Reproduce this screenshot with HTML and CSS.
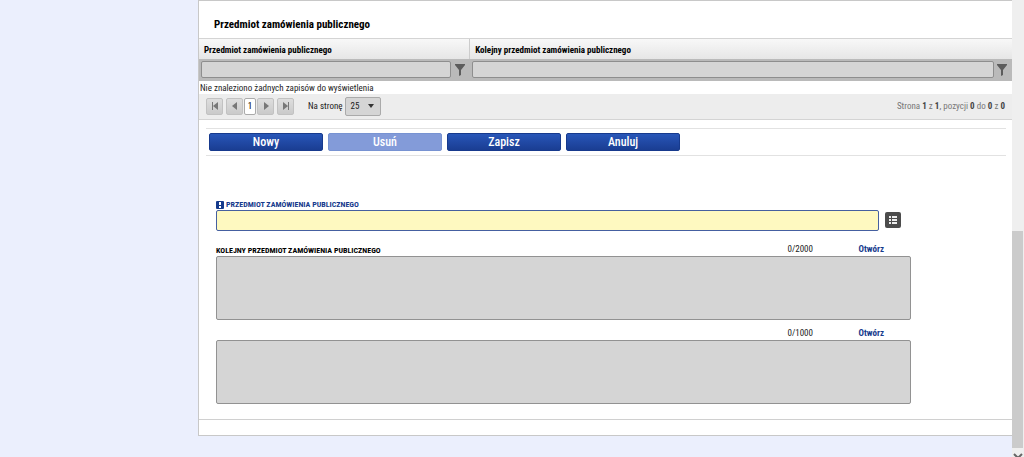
FILE: index.html
```html
<!DOCTYPE html>
<html lang="pl">
<head>
<meta charset="utf-8">
<meta name="viewport" content="width=device-width, initial-scale=1">
<title>Przedmiot zamówienia publicznego</title>
<link rel="stylesheet" href="styles.css">
</head>
<body>
<div class="page">
  <main class="panel">
    <h1 class="title">Przedmiot zamówienia publicznego</h1>
    <table class="grid">
      <colgroup><col class="col-first"><col></colgroup>
      <thead>
        <tr class="head"><th>Przedmiot zamówienia publicznego</th><th>Kolejny przedmiot zamówienia publicznego</th></tr>
        <tr class="filters">
          <td><div class="filter"><input type="text" aria-label="Filtr: Przedmiot zamówienia publicznego"><button type="button" aria-label="Filtruj"><svg width="10" height="12" viewBox="0 0 10 12"><path d="M0 0h10v1L6 6v5l-2 1V6L0 1z" fill="#5c5c5c"/></svg></button></div></td>
          <td><div class="filter filter-last"><input type="text" aria-label="Filtr: Kolejny przedmiot zamówienia publicznego"><button type="button" aria-label="Filtruj"><svg width="10" height="12" viewBox="0 0 10 12"><path d="M0 0h10v1L6 6v5l-2 1V6L0 1z" fill="#5c5c5c"/></svg></button></div></td>
        </tr>
      </thead>
      <tbody><tr class="empty"><td colspan="2">Nie znaleziono żadnych zapisów do wyświetlenia</td></tr></tbody>
    </table>
    <nav class="pager">
      <button type="button" class="nav-btn first" aria-label="Pierwsza"><svg width="8" height="8" viewBox="0 0 8 8"><path d="M1 0h1v8H1zM7 0v8L2 4z" fill="#777"/></svg></button>
      <button type="button" class="nav-btn" aria-label="Poprzednia"><svg width="8" height="8" viewBox="0 0 8 8"><path d="M6 0v8L1 4z" fill="#777"/></svg></button>
      <button type="button" class="current">1</button>
      <button type="button" class="nav-btn next" aria-label="Następna"><svg width="8" height="8" viewBox="0 0 8 8"><path d="M2 0v8l5-4z" fill="#777"/></svg></button>
      <button type="button" class="nav-btn" aria-label="Ostatnia"><svg width="8" height="8" viewBox="0 0 8 8"><path d="M6 0h1v8H6zM1 0v8l5-4z" fill="#777"/></svg></button>
      <label class="per-page" for="size">Na stronę</label>
      <span class="select"><select id="size"><option>25</option><option>50</option></select><svg width="6" height="4" viewBox="0 0 6 4"><path d="M0 0h6L3 4z" fill="#333"/></svg></span>
      <p class="summary">Strona <b>1</b> z <b>1</b>, pozycji <b>0</b> do <b>0</b> z <b>0</b></p>
    </nav>
    <div class="toolbar">
      <button type="button">Nowy</button>
      <button type="button" disabled>Usuń</button>
      <button type="button">Zapisz</button>
      <button type="button">Anuluj</button>
    </div>
    <form class="form">
      <label class="label required" for="subject"><svg width="8" height="8" viewBox="0 0 8 8"><rect width="8" height="8" rx="1" fill="#153a8c"/><path d="M3 1h2v3H3zM3 5h2v2H3z" fill="#fff"/></svg>PRZEDMIOT ZAMÓWIENIA PUBLICZNEGO</label>
      <div class="lookup">
        <input id="subject" type="text">
        <button type="button" aria-label="Wybierz z listy"><svg width="16" height="16" viewBox="0 0 16 16"><rect width="16" height="16" rx="2" fill="#4c4c4c"/><path d="M4 4h2v2H4zM7 4h5v2H7zM4 7h2v2H4zM7 7h5v2H7zM4 10h2v2H4zM7 10h5v2H7z" fill="#eee"/></svg></button>
      </div>
      <div class="area-head">
        <label class="label" for="next">KOLEJNY PRZEDMIOT ZAMÓWIENIA PUBLICZNEGO</label>
        <span class="count">0/2000</span><a href="#next">Otwórz</a>
      </div>
      <textarea id="next"></textarea>
      <div class="area-head">
        <span class="count">0/1000</span><a href="#extra">Otwórz</a>
      </div>
      <textarea id="extra" aria-label="Opis dodatkowy"></textarea>
    </form>
    <footer class="foot"></footer>
  </main>
  <div class="scroll">
    <div class="thumb"></div>
    <svg width="12" height="9" viewBox="0 0 12 9"><path d="M2 6l4 4 4-4" fill="none" stroke="#666" stroke-width="2"/></svg>
  </div>
</div>
</body>
</html>
```
FILE: styles.css
```css
* { box-sizing: border-box; }
body {
  margin: 0;
  background: #ebeffd;
  color: #222;
  font-family: "Roboto Condensed", Roboto, sans-serif;
  font-size: 9px;
  line-height: 12px;
}
button, input, select, textarea { margin: 0; font: inherit; }
button { padding: 0; border: 0; background: none; }
svg { display: block; }
.page { display: flex; min-height: 100vh; }
.panel {
  flex: 1;
  min-width: 0;
  align-self: flex-start;
  margin-left: 198px;
  border: 1px solid #c8c8c8;
  border-right: 0;
  background: #fff;
}
.title {
  margin: 0;
  padding: 16px 15px 5px;
  color: #000;
  font-size: 11px;
  line-height: 16px;
}
.grid { width: 100%; border-collapse: collapse; table-layout: fixed; }
.grid th, .grid td { padding: 0; }
.col-first { width: 33.3%; }
.head { height: 20px; background: linear-gradient(#f8f8f8, #e6e6e6); }
.grid th { padding: 2px 5px 0; border-top: 1px solid #d4d4d4; color: #000; text-align: left; }
.grid th + th { border-left: 1px solid #ccc; }
.filters { height: 22px; background: #bababa; }
.filter { display: flex; align-items: center; gap: 4px; padding: 0 5px 0 2px; }
.filter-last { gap: 3px; }
.filter input {
  flex: 1;
  min-width: 0;
  height: 17px;
  border: 1px solid #8e8e8e;
  border-radius: 2px;
  background: #d5d5d5;
}
.empty { height: 13px; }
.grid .empty td { padding: 1px 0 0 1px; }
.pager {
  display: flex;
  align-items: center;
  height: 26px;
  padding: 0 7px;
  border-bottom: 1px solid #d4d4d4;
  background: #ededed;
}
.nav-btn {
  display: flex;
  align-items: center;
  justify-content: center;
  width: 17px;
  height: 17px;
  border: 1px solid #c2c2c2;
  border-radius: 2px;
  background: linear-gradient(#dedede, #cacaca);
}
.first, .next { margin-right: 3px; }
.current {
  width: 12px;
  height: 17px;
  margin: 0 1px;
  border: 1px solid #aaa;
  border-radius: 2px;
  background: #fff;
  color: #000;
}
.per-page { margin: 0 3px 0 14px; }
.select { display: grid; align-items: center; }
.select select, .select svg { grid-area: 1 / 1; }
.select svg { justify-self: end; margin-right: 7px; pointer-events: none; }
.select select {
  appearance: none;
  width: 36px;
  height: 19px;
  padding: 0 4px;
  border: 1px solid #aaa;
  border-radius: 2px;
  background: #d5d5d5;
  color: #222;
}
.summary { margin: 0 0 0 auto; color: #777; }
.summary b { color: #444; }
.toolbar {
  display: flex;
  gap: 5px;
  margin: 8px 6px 0 7px;
  padding: 4px 3px;
  border: solid #e2e2e2;
  border-width: 1px 0;
}
.toolbar button {
  flex: 0 1 114px;
  height: 18px;
  border: 1px solid #173a8d;
  border-radius: 2px;
  background: linear-gradient(#2856b8, #1a3d92);
  color: #fff;
  font-size: 12px;
  font-weight: 500;
  line-height: 16px;
}
.toolbar button:disabled { border-color: #7893d2; background: #839bd9; }
.form { max-width: 729px; padding: 44px 17px 15px; }
.label { color: #000; font-size: 8px; font-weight: 700; line-height: 10px; }
.required { display: flex; align-items: center; gap: 2px; color: #153a8c; }
.lookup { display: flex; align-items: center; gap: 6px; padding-right: 10px; }
.lookup input {
  flex: 1;
  min-width: 0;
  height: 21px;
  border: 1px solid #4560a0;
  border-radius: 2px;
  background: #fef9c0;
}
.area-head { display: flex; align-items: flex-end; height: 20px; padding-right: 27px; }
.lookup + .area-head { height: 25px; }
.area-head .count { margin-left: auto; padding-bottom: 1px; }
.area-head a {
  width: 71px;
  padding-bottom: 1px;
  color: #153a8c;
  font-weight: 700;
  text-align: right;
  text-decoration: none;
}
.form textarea {
  display: block;
  width: 100%;
  height: 64px;
  border: 1px solid #929292;
  border-radius: 2px;
  background: #d5d5d5;
  resize: none;
}
.foot { height: 16px; border-top: 1px solid #d0d0d0; }
.scroll {
  display: flex;
  flex-direction: column;
  justify-content: flex-end;
  width: 12px;
  background: #efefef;
}
.thumb { height: 47.4%; margin-right: 1px; background: #cbcbcb; }
```
